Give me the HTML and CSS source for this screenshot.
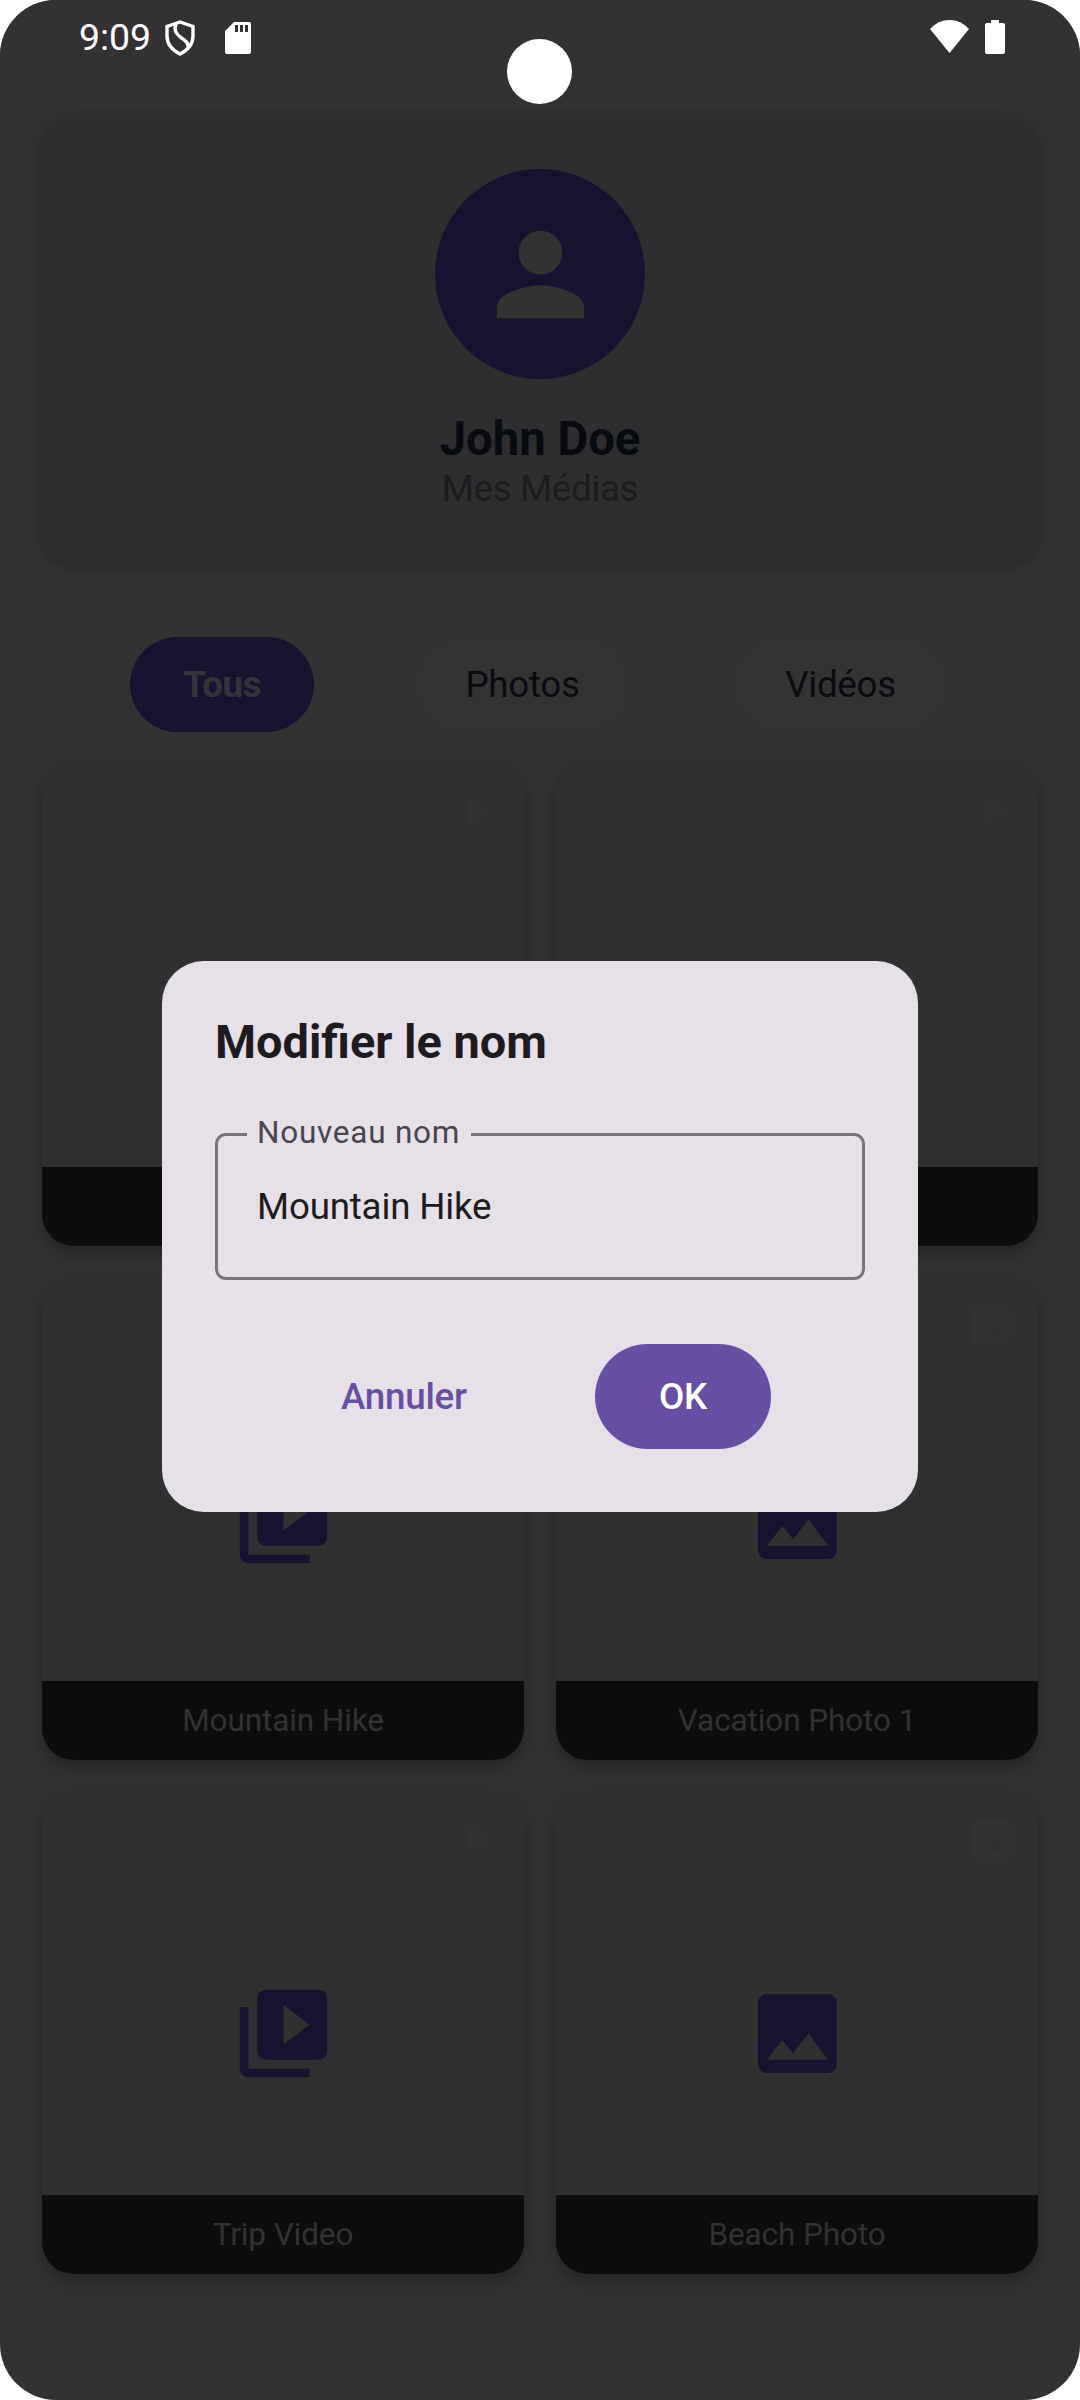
FILE: index.html
```html
<!DOCTYPE html>
<html lang="fr">
<head>
<meta charset="utf-8">
<title>Mes Médias</title>
<link rel="stylesheet" href="styles.css">
</head>
<body>
<svg class="symbols" aria-hidden="true">
  <symbol id="image" viewBox="0 0 24 24"><path d="M21 19V5c0-1.1-.9-2-2-2H5c-1.1 0-2 .9-2 2v14c0 1.1.9 2 2 2h14c1.1 0 2-.9 2-2zM8.500 13.500l2.500 3.010L14.500 12l4.500 6H5l3.500-4.500z"/></symbol>
  <symbol id="video" viewBox="0 0 24 24"><path d="M4 6H2v14c0 1.100.9 2 2 2h14v-2H4V6zm16-4H8c-1.100 0-2 .9-2 2v12c0 1.100.9 2 2 2h12c1.100 0 2-.9 2-2V4c0-1.100-.9-2-2-2zm-8 12.500v-9l6 4.500-6 4.500z"/></symbol>
  <symbol id="play" viewBox="0 0 24 24"><path d="M8 5v14l11-7z"/></symbol>
  <symbol id="person" viewBox="0 0 24 24"><path d="M12 12c2.210 0 4-1.790 4-4s-1.790-4-4-4-4 1.790-4 4 1.790 4 4 4zm0 2c-2.670 0-8 1.340-8 4v2h16v-2c0-2.660-5.330-4-8-4z"/></symbol>
</svg>
<div class="screen">
  <header class="status">
    <span class="time">9:09</span>
    <svg class="shield" viewBox="0 0 30 36"><path d="M15 2 28 6.500V16c0 8-5 14-13 18C7 30 2 24 2 16V6.500z"/><path d="M11 4C8.500 10 11 14 16 17.500c5.500 4 7 5 7 9"/></svg>
    <svg class="sd" viewBox="0 0 26 32"><path fill-rule="evenodd" d="M9 0H24q2 0 2 2V30q0 2-2 2H2q-2 0-2-2V9zM10 3V10h3V3zM15 3V10h3V3zM20 3V10h3V3z"/></svg>
    <svg class="wifi" viewBox="0 0 39 33"><path d="M0 9Q8 0 19.500 0T39 9L19.500 33z"/></svg>
    <svg class="battery" viewBox="0 0 20 34"><path d="M6 0h8v3h4q2 0 2 2V32q0 2-2 2H2q-2 0-2-2V5q0-2 2-2h4z"/></svg>
    <span class="camera"></span>
  </header>
  <main class="content">
    <section class="profile">
      <div class="avatar"><svg><use href="#person"/></svg></div>
      <h1>John Doe</h1>
      <p>Mes Médias</p>
    </section>
    <nav class="filters">
      <button class="chip active">Tous</button>
      <button class="chip">Photos</button>
      <button class="chip">Vidéos</button>
    </nav>
    <section class="grid">
      <article class="tile"><svg class="badge"><use href="#play"/></svg><svg class="media"><use href="#video"/></svg><footer></footer></article>
      <article class="tile"><svg class="badge"><use href="#play"/></svg><svg class="media"><use href="#video"/></svg><footer></footer></article>
      <article class="tile"><svg class="badge"><use href="#play"/></svg><svg class="media"><use href="#video"/></svg><footer>Mountain Hike</footer></article>
      <article class="tile"><svg class="badge"><use href="#image"/></svg><svg class="media"><use href="#image"/></svg><footer>Vacation Photo 1</footer></article>
      <article class="tile"><svg class="badge"><use href="#play"/></svg><svg class="media"><use href="#video"/></svg><footer>Trip Video</footer></article>
      <article class="tile"><svg class="badge"><use href="#image"/></svg><svg class="media"><use href="#image"/></svg><footer>Beach Photo</footer></article>
    </section>
  </main>
  <div class="overlay">
    <div class="dialog" role="dialog">
      <h2>Modifier le nom</h2>
      <div class="field"><span class="label">Nouveau nom</span><span>Mountain Hike</span></div>
      <div class="actions">
        <button class="cancel">Annuler</button>
        <button class="ok">OK</button>
      </div>
    </div>
  </div>
</div>
</body>
</html>
```
FILE: styles.css
```css
* { box-sizing: border-box; margin: 0; }
body { background: #fff; font-family: Roboto, sans-serif; }
button { border: 0; background: none; font: inherit; letter-spacing: inherit; padding: 0; }
svg { display: block; fill: currentColor; }
.symbols { position: absolute; width: 0; height: 0; }

.screen {
  position: relative;
  width: 1080px;
  height: 2400px;
  border-radius: 56px;
  overflow: hidden;
  background: #323232;
}

.status {
  position: relative;
  display: flex;
  align-items: flex-start;
  height: 72px;
  padding: 0 75px 0 79px;
  background: #343134;
  color: #fff;
}
.time { width: 86px; padding-top: 16px; font-size: 37.4px; line-height: 43px; }
.shield { width: 30px; height: 36px; margin-top: 20px; fill: none; stroke: currentColor; stroke-width: 3.4; }
.sd { width: 26px; height: 32px; margin: 22px 0 0 30px; }
.wifi { width: 39px; height: 33px; margin: 20px 0 0 auto; }
.battery { width: 20px; height: 34px; margin: 20px 0 0 16px; }
.camera {
  position: absolute;
  left: 507px;
  top: 39px;
  width: 65px;
  height: 65px;
  border-radius: 50%;
  background: #fff;
}

.content { padding: 44px 42px 0; }
.profile {
  display: flex;
  flex-direction: column;
  align-items: center;
  height: 447px;
  padding-top: 53px;
  border-radius: 32px;
  background: #2e2d30;
  box-shadow: 0 5px 14px rgba(0, 0, 0, .13), 0 0 10px rgba(0, 0, 0, .08);
}
.avatar {
  display: grid;
  place-items: center;
  width: 210px;
  height: 210px;
  border-radius: 50%;
  background: #161331;
  color: #323232;
}
.avatar svg { width: 131px; height: 131px; }
.profile h1 { margin-top: 32px; font-size: 47.25px; line-height: 57px; font-weight: 700; color: #080b0f; }
.profile p { font-size: 36.75px; line-height: 42px; letter-spacing: -.35px; color: #1a1d1e; }

.filters { display: flex; margin-top: 74px; padding-left: 88px; letter-spacing: -.3px; }
.chip {
  width: 219px;
  height: 95px;
  margin-left: 99px;
  border-radius: 48px;
  background: #333333;
  font-size: 36.75px;
  color: #080b0f;
}
.chip.active { width: 184px; margin: 0; background: #161331; color: #343436; font-weight: 700; letter-spacing: -.6px; }

.grid { display: grid; grid-template-columns: 482px 482px; gap: 32px; margin-top: 32px; }
.tile {
  position: relative;
  display: flex;
  flex-direction: column;
  align-items: center;
  justify-content: flex-end;
  height: 482px;
  border-radius: 32px;
  overflow: hidden;
  background: #2f3130;
  box-shadow: 0 9px 16px rgba(0, 0, 0, .22), 0 2px 8px rgba(0, 0, 0, .06);
}
.badge { position: absolute; top: 21px; right: 21px; width: 52.5px; height: 52.5px; color: #333232; }
.media { width: 105px; height: 105px; margin-bottom: 109px; color: #161331; }
.tile footer {
  width: 100%;
  height: 79px;
  background: #0d0d0d;
  color: #323232;
  font-size: 31.5px;
  letter-spacing: -.1px;
  line-height: 79px;
  text-align: center;
}

.overlay { position: absolute; inset: 961px 162px auto; }
.dialog {
  height: 551px;
  padding: 53px;
  border-radius: 42px;
  background: #e6e0e9;
  color: #1d1b20;
}
.dialog h2 { font-size: 46.9px; line-height: 56px; font-weight: 700; }
.field {
  position: relative;
  display: flex;
  height: 147px;
  margin-top: 63px;
  padding: 49px 39px 0;
  border: 3px solid #79747e;
  border-radius: 11px;
  font-size: 36.75px;
  line-height: 43px;
  letter-spacing: -.2px;
}
.label {
  position: absolute;
  left: 29px;
  top: -24px;
  width: 224px;
  padding-left: 10px;
  background: #e6e0e9;
  color: #49454f;
  font-size: 31.5px;
  line-height: 42px;
  letter-spacing: .75px;
}
.actions { display: flex; height: 105px; margin-top: 64px; font-size: 36.75px; font-weight: 500; letter-spacing: -.25px; }
.cancel { margin-left: 126px; color: #6750a4; }
.ok { width: 176px; margin-left: auto; margin-right: 94px; border-radius: 53px; background: #6750a4; color: #fff; }
```
